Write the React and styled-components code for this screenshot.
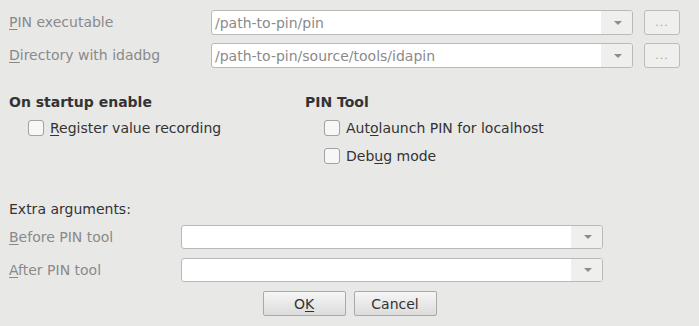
import styled, { createGlobalStyle } from "styled-components";

const GlobalStyle = createGlobalStyle`
  html, body {
    margin: 0;
    padding: 0;
    background: #e8e8e7;
  }
  body {
    font-family: "DejaVu Sans", "Liberation Sans", sans-serif;
    font-size: 14px;
  }
`;

const Dialog = styled.div`
  width: 699px;
  height: 326px;
  box-sizing: border-box;
  padding: 10px 0 0 9px;
  background: #e8e8e7;
  color: #333;
  display: flex;
  flex-direction: column;
  overflow: hidden;
`;

const PathGrid = styled.div`
  display: grid;
  grid-template-columns: 202px 422px 47px;
  row-gap: 8px;
  align-items: center;
`;

const ArgsGrid = styled.div`
  display: grid;
  grid-template-columns: 172px 422px;
  row-gap: 9px;
  align-items: center;
`;

const Label = styled.div`
  color: #8a8a8a;
  line-height: 17px;
`;

const Key = styled.span`
  text-decoration: underline;
  text-underline-offset: 2px;
`;

const Combo = styled.div`
  height: ${(p) => p.h || 25}px;
  box-sizing: border-box;
  border: 1px solid #b9b9b9;
  border-radius: 3px;
  background: #fff;
  display: flex;
  overflow: hidden;
`;

const ComboText = styled.div`
  flex: 1;
  padding-left: 3px;
  display: flex;
  align-items: center;
  color: #8a8a8a;
`;

const ComboArrow = styled.div`
  width: 31px;
  background: #efefee;
  display: flex;
  align-items: center;
  justify-content: center;

  &::after {
    content: "";
    border-left: 4px solid transparent;
    border-right: 4px solid transparent;
    border-top: 4px solid #8c8c8c;
    margin-left: 2px;
  }
`;

const DotsButton = styled.div`
  height: 25px;
  margin-left: 11px;
  box-sizing: border-box;
  border: 1px solid #bcbcbc;
  border-radius: 3px;
  background: #efefee;
  color: #a0a0a0;
  display: flex;
  align-items: center;
  justify-content: center;
  font-size: 11px;
  letter-spacing: 1px;
`;

const Options = styled.div`
  display: grid;
  grid-template-columns: 296px 1fr;
  margin-top: 26px;
`;

const Group = styled.div`
  display: flex;
  flex-direction: column;
`;

const GroupTitle = styled.div`
  font-weight: bold;
  line-height: 17px;
  margin-bottom: 3px;
`;

const CheckRow = styled.label`
  display: flex;
  align-items: center;
  gap: 6px;
  height: 28px;
  padding-left: 19px;
`;

const Box = styled.span`
  width: 16px;
  height: 16px;
  box-sizing: border-box;
  border: 1px solid #a3a3a3;
  border-radius: 3px;
  background: #f7f7f7;
`;

const SectionLabel = styled.div`
  line-height: 17px;
  margin-top: 31px;
  margin-bottom: 7px;
`;

const Buttons = styled.div`
  display: flex;
  justify-content: center;
  gap: 8px;
  margin-top: 9px;
  margin-left: -9px;
`;

const PushButton = styled.div`
  width: 83px;
  height: 25px;
  box-sizing: border-box;
  border: 1px solid #a9a9a9;
  border-radius: 2px;
  background: linear-gradient(#f6f6f6, #dcdcdc);
  display: flex;
  align-items: center;
  justify-content: center;
  color: #333;
`;

const Check = ({ children }) => (
  <CheckRow>
    <Box />
    <span>{children}</span>
  </CheckRow>
);

const App = () => {
  return (
    <>
      <GlobalStyle />
      <Dialog>
        <PathGrid>
          <Label>
            <Key>P</Key>IN executable
          </Label>
          <Combo>
            <ComboText>/path-to-pin/pin</ComboText>
            <ComboArrow />
          </Combo>
          <DotsButton>...</DotsButton>
          <Label>
            <Key>D</Key>irectory with idadbg
          </Label>
          <Combo>
            <ComboText>/path-to-pin/source/tools/idapin</ComboText>
            <ComboArrow />
          </Combo>
          <DotsButton>...</DotsButton>
        </PathGrid>

        <Options>
          <Group>
            <GroupTitle>On startup enable</GroupTitle>
            <Check>
              <Key>R</Key>egister value recording
            </Check>
          </Group>
          <Group>
            <GroupTitle>PIN Tool</GroupTitle>
            <Check>
              Aut<Key>o</Key>launch PIN for localhost
            </Check>
            <Check>
              Deb<Key>u</Key>g mode
            </Check>
          </Group>
        </Options>

        <SectionLabel>Extra arguments:</SectionLabel>
        <ArgsGrid>
          <Label>
            <Key>B</Key>efore PIN tool
          </Label>
          <Combo h={24}>
            <ComboText />
            <ComboArrow />
          </Combo>
          <Label>
            <Key>A</Key>fter PIN tool
          </Label>
          <Combo h={24}>
            <ComboText />
            <ComboArrow />
          </Combo>
        </ArgsGrid>

        <Buttons>
          <PushButton>
            O<Key>K</Key>
          </PushButton>
          <PushButton>Cancel</PushButton>
        </Buttons>
      </Dialog>
    </>
  );
};

export default App;
